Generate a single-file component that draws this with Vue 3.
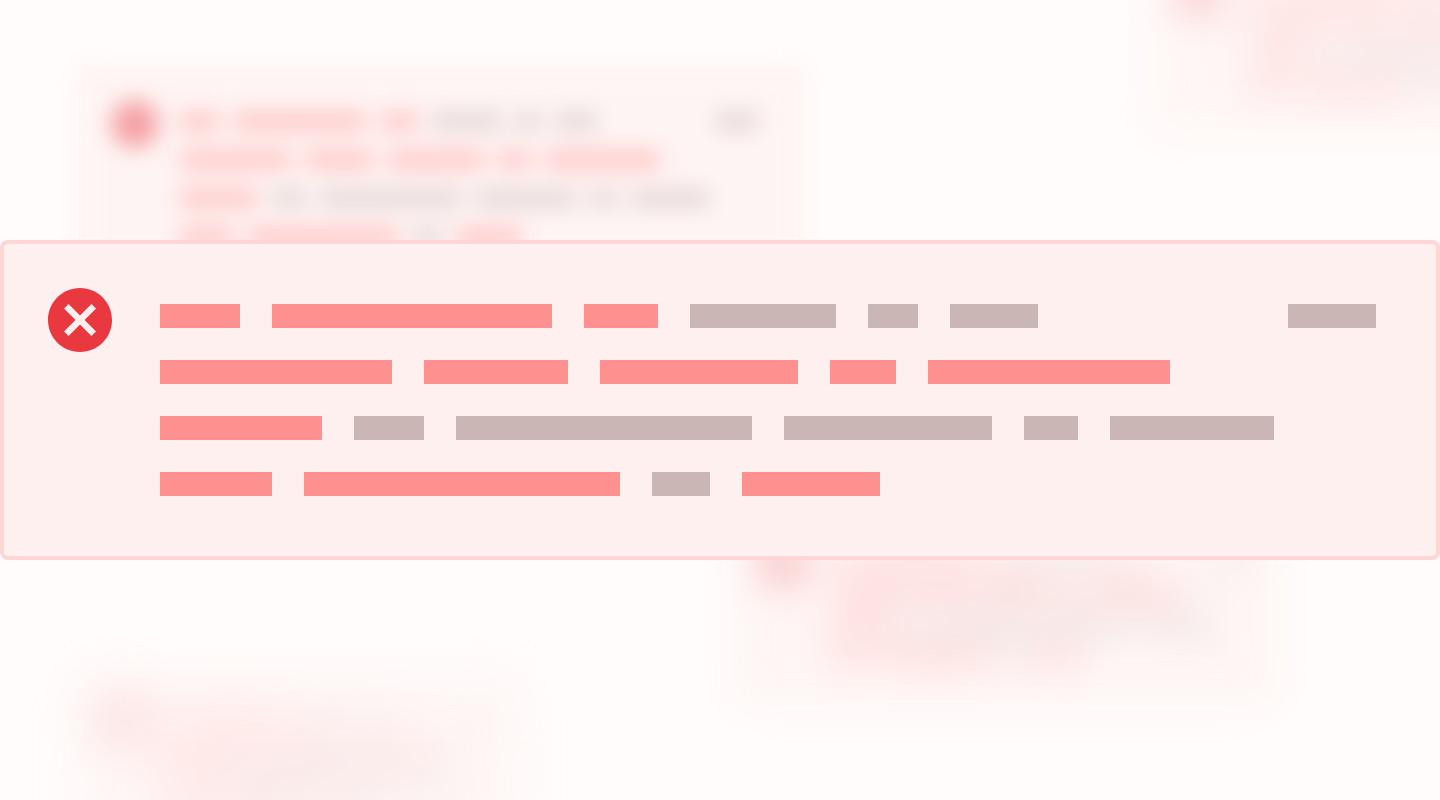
<script setup>
const iconPath =
  'M12 2C6.47 2 2 6.47 2 12s4.47 10 10 10 10-4.47 10-10S17.53 2 12 2zm5 13.59L15.59 17 12 13.41 8.41 17 7 15.59 10.59 12 7 8.41 8.41 7 12 10.59 15.59 7 17 8.41 13.41 12 17 15.59z'

// Each row lists placeholder words: [width, tone]
const rows = [
  [[80, 'strong'], [280, 'strong'], [74, 'strong'], [146, 'muted'], [50, 'muted'], [88, 'muted'], [88, 'muted', true]],
  [[232, 'strong'], [144, 'strong'], [198, 'strong'], [66, 'strong'], [242, 'strong']],
  [[162, 'strong'], [70, 'muted'], [296, 'muted'], [208, 'muted'], [54, 'muted'], [164, 'muted']],
  [[112, 'strong'], [316, 'strong'], [58, 'muted'], [138, 'strong']],
].map((row) => row.map(([width, tone, end]) => ({ width, tone, end })))

// The same words, placed for the scaled background copies
const words = rows.flatMap((row, r) => {
  let x = 0
  return row.map((word) => {
    const at = word.end ? 1128 : x
    x += word.width + 32
    return { x: at, y: r * 56, width: word.width, tone: word.tone }
  })
})

const ghosts = [
  { name: 'near', x: 80, y: 67, w: 723, h: 220, cx: 55, cy: 57, size: 48, tx: 100, ty: 46, sx: 0.475, sy: 0.6875 },
  { name: 'middle', x: 735, y: 518, w: 541, h: 186, cx: 47, cy: 46, size: 42, tx: 98, ty: 36, sx: 0.34, sy: 0.571 },
  { name: 'far', x: 1151, y: -51, w: 541, h: 186, cx: 47, cy: 46, size: 42, tx: 98, ty: 36, sx: 0.34, sy: 0.571 },
  { name: 'farthest', x: 80, y: 676, w: 440, h: 180, cx: 42, cy: 44, size: 40, tx: 86, ty: 38, sx: 0.262, sy: 0.56 },
]
</script>

<template>
  <main class="page">
    <svg class="backdrop" viewBox="0 0 1440 800" preserveAspectRatio="xMidYMid slice" aria-hidden="true">
      <g v-for="g in ghosts" :key="g.name" :class="['ghost', g.name]">
        <g :transform="`translate(${g.x} ${g.y})`">
          <rect class="ghost-card" x="1" y="1" :width="g.w - 2" :height="g.h - 2" rx="6" />
          <circle class="ghost-icon" :cx="g.cx" :cy="g.cy" :r="g.size / 2" />
          <g :transform="`translate(${g.tx} ${g.ty}) scale(${g.sx} ${g.sy})`">
            <rect v-for="(word, i) in words" :key="i" :class="word.tone" :x="word.x" :y="word.y" :width="word.width" height="24" />
          </g>
        </g>
      </g>
    </svg>

    <section class="alert" role="alert">
      <svg class="icon" viewBox="2 2 20 20" aria-hidden="true">
        <path :d="iconPath" />
      </svg>
      <div class="lines">
        <div v-for="(row, r) in rows" :key="r" class="line">
          <span
            v-for="(word, i) in row"
            :key="i"
            :class="['word', word.tone, { end: word.end }]"
            :style="{ width: word.width + 'px' }"
          ></span>
        </div>
      </div>
    </section>
  </main>
</template>

<style>
body {
  background: #fffcfb;
}
</style>

<style scoped>
.page {
  position: relative;
  display: flex;
  flex-direction: column;
  justify-content: center;
  min-height: 100vh;
  overflow: hidden;
}
.backdrop {
  position: absolute;
  inset: 0;
  width: 100%;
  height: 100%;
}
.ghost-card {
  fill: #fef0ef;
  stroke: #ffd5d5;
  stroke-width: 2;
}
.ghost-icon {
  fill: #ea3840;
  fill-opacity: 0.75;
}
.near {
  filter: blur(11px);
  opacity: 0.6;
}
.near .strong,
.near .muted {
  fill-opacity: 0.9;
}
.middle {
  filter: blur(20px);
  opacity: 0.5;
}
.far {
  filter: blur(20px);
  opacity: 0.4;
}
.farthest {
  filter: blur(27px);
  opacity: 0.4;
}
.alert {
  position: relative;
  display: flex;
  gap: 48px;
  padding: 44px 60px 60px 44px;
  background: #fef0ee;
  border: 4px solid #ffd5d5;
  border-radius: 8px;
}
.icon {
  flex: none;
  width: 64px;
  height: 64px;
  fill: #ea3840;
}
.lines {
  flex: 1;
  display: flex;
  flex-direction: column;
  gap: 32px;
  min-width: 0;
  padding-top: 16px;
}
.line {
  display: flex;
  gap: 32px;
}
.word {
  height: 24px;
}
.end {
  margin-left: auto;
}
.strong {
  background: #ff9090;
  fill: #ff9090;
}
.muted {
  background: #cbb6b6;
  fill: #cbb6b6;
}
</style>
